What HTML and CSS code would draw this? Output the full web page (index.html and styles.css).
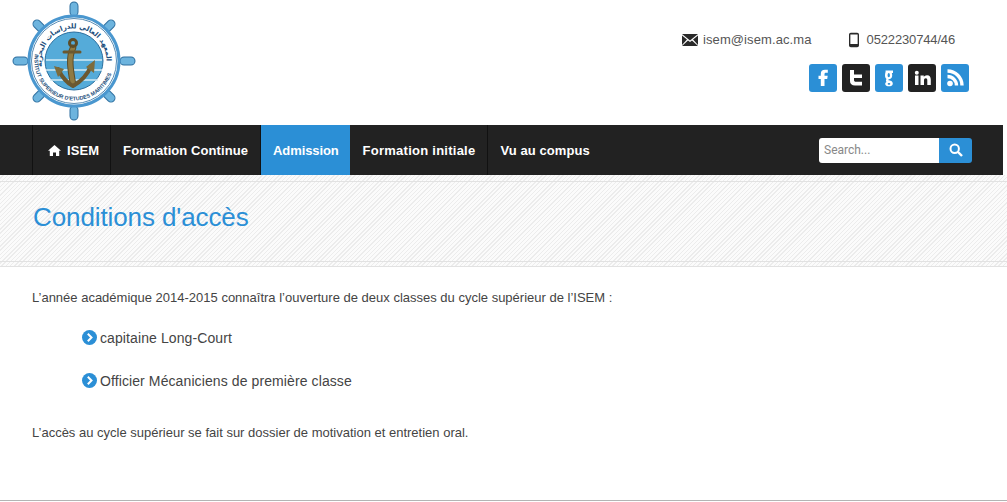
FILE: index.html
```html
<!DOCTYPE html>
<html lang="fr">
<head>
  <meta charset="UTF-8">
  <meta name="viewport" content="width=device-width, initial-scale=1.0">
  <title>ISEM - Conditions d'accès</title>
  <link rel="stylesheet" href="styles.css">
</head>
<body>

<header class="top">
  <a class="logo" href="#">
    <svg width="125" height="122" viewBox="0 0 125 122">
      <defs>
        <path id="ringTop" d="M30 66.600 A32.500 32.500 0 1 1 94 66.600"/>
        <path id="ringBottom" d="M23.100 54.100 A39.500 39.500 0 1 0 100.900 54.100"/>
      </defs>
      <g fill="none" stroke-linecap="round">
        <g stroke="#2f6f9f" stroke-width="4">
          <path d="M62 14V24M62 98V108M16 61H26M98 61H108M29 28L36 35M95 28L88 35M29 94L36 87M95 94L88 87"/>
        </g>
        <g stroke="#2f6f9f" stroke-width="9">
          <path d="M62 6V12M62 110V116M5 61H12M112 61H119M25 24L29 28M99 24L95 28M25 98L29 94M99 98L95 94"/>
        </g>
        <g stroke="#6db4de" stroke-width="7">
          <path d="M62 6V12M62 110V116M5 61H12M112 61H119M25 24L29 28M99 24L95 28M25 98L29 94M99 98L95 94"/>
        </g>
      </g>
      <circle cx="62" cy="61" r="45" fill="#fff" stroke="#4a97cf" stroke-width="3"/>
      <circle cx="62" cy="61" r="42.500" fill="none" stroke="#2f6f9f" stroke-width="0.800"/>
      <circle cx="62" cy="61" r="29" fill="#55abd9" stroke="#2b6f9f" stroke-width="1"/>
      <path d="M34 60H90M34 70H90M38 80H86" stroke="#d4ecf5" stroke-width="1.500"/>
      <g fill="none" stroke-linecap="round" stroke-linejoin="round">
        <path d="M61 48C56 58 59 72 61 84" stroke="#5d4c28" stroke-width="6.500"/>
        <path d="M61 48C56 58 59 72 61 84" stroke="#8f7a42" stroke-width="4.500"/>
        <circle cx="61" cy="43" r="3.500" stroke="#5d4c28" stroke-width="3"/>
        <path d="M46 69C50 77 55 83 61 86C68 82 75 76 79 66" stroke="#6b5830" stroke-width="4"/>
        <path d="M52 52H68" stroke="#6b5830" stroke-width="3"/>
      </g>
      <path d="M42 66L52 69L46 77ZM83 60L74 67L82 73Z" fill="#7d6c3c"/>
      <text class="logo-ar"><textPath href="#ringTop">المعهد العالي للدراسات البحرية</textPath></text>
      <text class="logo-fr"><textPath href="#ringBottom">INSTITUT SUPERIEUR D'ETUDES MARITIMES</textPath></text>
    </svg>
  </a>
  <div class="top-right">
    <div class="contact">
      <span class="contact-item email">
        <svg width="16" height="12" viewBox="0 0 16 12"><path d="M0 0H16L8 6.500ZM0 1.500V11L5 5.500ZM16 1.500V11L11 5.500ZM0 12L6 6.500L8 8L10 6.500L16 12Z" fill="#2a2a2a"/></svg>
        isem@isem.ac.ma
      </span>
      <span class="contact-item phone">
        <svg width="10" height="16" viewBox="0 0 11 16"><path fill-rule="evenodd" d="M2 0H9Q11 0 11 2V14Q11 16 9 16H2Q0 16 0 14V2Q0 0 2 0ZM1.500 2V12.500H9.500V2Z" fill="#2a2a2a"/></svg>
        0522230744/46
      </span>
    </div>
    <div class="social">
      <a class="soc blue" href="#"><svg width="28" height="28" viewBox="0 0 28 28"><path d="M15.500 22V15H18.200L18.700 11.800H15.500V10.200C15.500 9.200 15.900 8.700 17 8.700H18.800V5.800H16C13.200 5.800 11.800 7.300 11.800 9.900V11.800H9.500V15H11.800V22Z" fill="#fff"/></svg></a>
      <a class="soc dark" href="#"><svg width="28" height="28" viewBox="0 0 28 28"><path d="M8 6H12V10.500H20V14H12V16C12 17.200 12.600 17.800 14 17.800H20V21.500H13C9.800 21.500 8 19.800 8 17Z" fill="#fff"/></svg></a>
      <a class="soc blue" href="#"><svg width="28" height="28" viewBox="0 0 28 28"><path fill-rule="evenodd" d="M10.500 6.500H18V9H16.800C17.200 10 17.200 11 17.200 11.500C17.200 14 15.500 15.300 13.800 15.300L13.200 16C13.400 16.600 17.800 16.300 17.800 19.400C17.800 21.800 15.800 22.300 14 22.300C12 22.300 10.200 21.700 10.200 20C10.200 19 10.800 18.400 11.500 18C10.700 17 10.800 15.800 11.500 15C10.500 14.200 10 13 10 11.500C10 9 11 7.500 10.500 6.500ZM13.800 9C13 9 12.600 10 12.600 11.300C12.600 12.500 13 13.300 13.800 13.300C14.600 13.300 14.900 12.500 14.900 11.300C14.900 10 14.600 9 13.800 9ZM14 19C13.200 19 12.700 19.300 12.700 20C12.700 20.500 13.200 20.700 14 20.700C14.800 20.700 15.300 20.500 15.300 20C15.300 19.300 14.800 19 14 19Z" fill="#fff"/></svg></a>
      <a class="soc dark" href="#"><svg width="28" height="28" viewBox="0 0 28 28"><path d="M7 11.500H10.500V21H7ZM8.800 6.800A2 2 0 1 1 8.800 10.800A2 2 0 1 1 8.800 6.800ZM12.500 11.500H15.800V12.900C16.400 12 17.500 11.200 19 11.200C21.800 11.200 22.800 13 22.800 15.800V21H19.300V16.400C19.300 15.200 18.900 14.300 17.800 14.300C16.600 14.300 16 15.200 16 16.400V21H12.500Z" fill="#fff"/></svg></a>
      <a class="soc blue" href="#"><svg width="28" height="28" viewBox="0 0 28 28"><circle cx="9" cy="19.500" r="2.800" fill="#fff"/><path d="M6.500 12.500A9 9 0 0 1 15.500 21.500M6.500 7A14.500 14.500 0 0 1 21 21.500" fill="none" stroke="#fff" stroke-width="3.400"/></svg></a>
    </div>
  </div>
</header>

<nav class="navbar">
  <ul class="menu">
    <li class="home"><a href="#"><svg width="13" height="11" viewBox="0 0 13 11"><path d="M6.500 0L13 5.800H11.200V11H8V7.500H5V11H1.800V5.800H0Z" fill="#fff"/></svg> ISEM</a></li>
    <li><a href="#">Formation Continue</a></li>
    <li class="active"><a href="#">Admission</a></li>
    <li class="wide"><a href="#">Formation initiale</a></li>
    <li><a href="#">Vu au compus</a></li>
  </ul>
  <form class="search">
    <input type="text" placeholder="Search...">
    <button type="button"><svg width="14" height="14" viewBox="0 0 14 14"><circle cx="5.700" cy="5.700" r="4.200" fill="none" stroke="#fff" stroke-width="2"/><path d="M9 9L13 13" stroke="#fff" stroke-width="2.400"/></svg></button>
  </form>
</nav>

<section class="page-title">
  <div class="page-title-inner">
    <h1>Conditions d'accès</h1>
  </div>
</section>

<main class="content">
  <p>L’année académique 2014-2015 connaîtra l’ouverture de deux classes du cycle supérieur de l’ISEM :</p>
  <ul class="classes">
    <li><span class="arrow"><svg width="15" height="15" viewBox="0 0 15 15"><circle cx="7.500" cy="7.500" r="7.500" fill="#2b8fd6"/><path d="M5.800 3.800L9.500 7.500L5.800 11.200" fill="none" stroke="#fff" stroke-width="2"/></svg></span>capitaine Long-Court</li>
    <li><span class="arrow"><svg width="15" height="15" viewBox="0 0 15 15"><circle cx="7.500" cy="7.500" r="7.500" fill="#2b8fd6"/><path d="M5.800 3.800L9.500 7.500L5.800 11.200" fill="none" stroke="#fff" stroke-width="2"/></svg></span>Officier Mécaniciens de première classe</li>
  </ul>
  <p>L’accès au cycle supérieur se fait sur dossier de motivation et entretien oral.</p>
</main>

</body>
</html>
```

FILE: styles.css
```css
:root {
  --blue: #2b8fd6;
  --dark: #222222;
  --text: #444444;
}

body {
  margin: 0;
  height: 501px;
  box-sizing: border-box;
  overflow: hidden;
  border-bottom: 1px solid #b4b4b4;
  font-family: "Liberation Sans", Arial, sans-serif;
  color: var(--text);
  background: #fff;
}

a {
  text-decoration: none;
}

.top {
  display: flex;
  justify-content: space-between;
  height: 125px;
  padding: 0 38px 0 12px;
}
.logo {
  display: block;
}
.logo svg {
  display: block;
}
.logo-ar {
  font-family: "DejaVu Sans", sans-serif;
  font-size: 7px;
  font-weight: bold;
  fill: #1d4f7c;
}
.logo-fr {
  font-family: "Liberation Sans", sans-serif;
  font-size: 5.400px;
  font-weight: bold;
  fill: #1d4f7c;
}

.top-right {
  display: flex;
  flex-direction: column;
  align-items: flex-end;
  padding-top: 32px;
}
.contact {
  display: flex;
  gap: 37px;
  font-size: 13px;
  line-height: 16px;
  margin-right: 14px;
  color: #555;
}
.contact-item {
  display: flex;
  align-items: center;
  gap: 5px;
}
.contact-item.email {
  letter-spacing: 0.1px;
}
.contact-item.phone {
  gap: 8px;
  letter-spacing: -0.15px;
}
.social {
  display: flex;
  gap: 5px;
  margin-top: 16px;
}
.soc {
  display: block;
  width: 28px;
  height: 28px;
  border-radius: 3px;
}
.soc svg {
  display: block;
}
.soc.blue {
  background: var(--blue);
}
.soc.dark {
  background: var(--dark);
}

.navbar {
  display: flex;
  justify-content: space-between;
  align-items: center;
  width: 1003px;
  height: 50px;
  box-sizing: border-box;
  padding: 0 31px 0 32px;
  background: var(--dark);
}
.menu {
  display: flex;
  height: 100%;
  margin: 0;
  padding: 0;
  list-style: none;
  border-left: 1px solid #111;
}
.menu li {
  border-right: 1px solid #111;
}
.menu li:last-child {
  border-right: none;
}
.menu a {
  display: flex;
  align-items: center;
  gap: 6px;
  height: 100%;
  padding: 0 12px;
  font-size: 13px;
  letter-spacing: 0.08px;
  font-weight: bold;
  color: #fff;
}
.menu li.home a {
  padding: 0 11px 0 15px;
}
.menu li.active {
  background: var(--blue);
  border-right: none;
}
.menu li.active a {
  padding-right: 11px;
  letter-spacing: -0.1px;
}
.menu li.wide {
  margin-left: 1px;
}
.menu li.wide a {
  letter-spacing: 0.25px;
}
.search {
  display: flex;
  height: 25px;
}
.search input {
  width: 120px;
  box-sizing: border-box;
  padding: 0 5px;
  border: none;
  border-radius: 3px 0 0 3px;
  font-family: Roboto, sans-serif;
  font-size: 12px;
  background: #fff;
}
.search input::placeholder {
  color: #888;
}
.search button {
  display: flex;
  align-items: center;
  justify-content: center;
  width: 33px;
  padding: 0;
  border: none;
  border-radius: 0 3px 3px 0;
  background: var(--blue);
}

.page-title {
  height: 92px;
  box-sizing: border-box;
  padding: 6px 0;
  background: repeating-linear-gradient(135deg, #fbfbfb 0, #fbfbfb 2px, #ececec 2px, #ececec 3px);
  border-bottom: 1px solid #e2e2e2;
}
.page-title-inner {
  height: 79px;
  border-top: 1px solid #e2e2e2;
  border-bottom: 1px solid #e2e2e2;
}
.page-title h1 {
  margin: 20px 0 0 33px;
  font-size: 26px;
  letter-spacing: -0.1px;
  line-height: 30px;
  font-weight: normal;
  color: var(--blue);
}

.content {
  padding: 23px 32px 0;
  font-size: 13px;
  line-height: 16px;
}
.content p {
  margin: 0;
}
.classes {
  margin: 23px 0 36px;
  padding: 0 0 0 50px;
  list-style: none;
  font-size: 14px;
  letter-spacing: 0.1px;
}
.classes li {
  display: flex;
  align-items: center;
  gap: 3px;
  height: 17px;
  margin-bottom: 26px;
}
.classes li:last-child {
  margin-bottom: 0;
}
.arrow {
  display: flex;
}
```
